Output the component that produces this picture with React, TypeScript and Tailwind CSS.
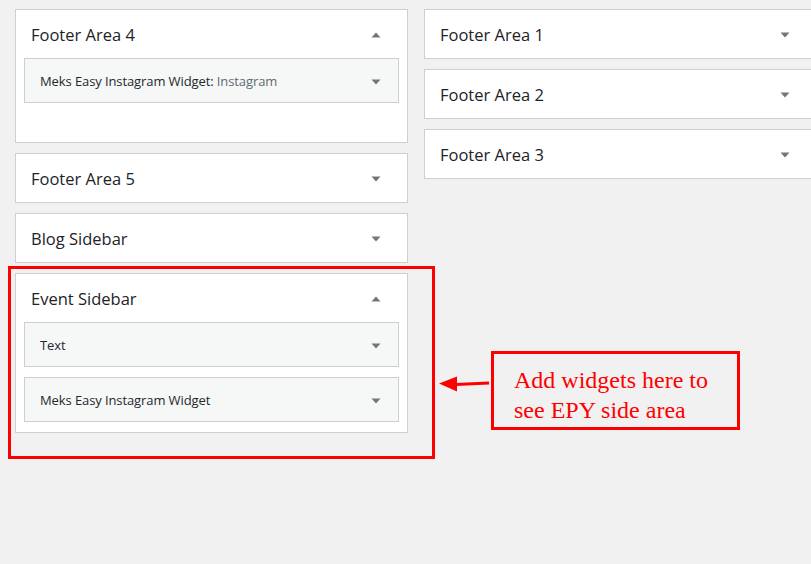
import React from "react";

const font = { fontFamily: '"Open Sans", "Noto Sans", Arial, sans-serif' };

function Caret({ up }: { up?: boolean }) {
  return (
    <svg width="10" height="6" viewBox="0 0 10 6" className="shrink-0">
      {up ? <path d="M5 0.5 L9.5 5.5 L0.5 5.5 Z" fill="#72777c" /> : <path d="M0.5 0.5 L9.5 0.5 L5 5.5 Z" fill="#72777c" />}
    </svg>
  );
}

function Widget({ title, sub }: { title: string; sub?: string }) {
  return (
    <div className="h-[45px] border border-[#ccd0d4] bg-[#f6f7f7] flex items-center justify-between pl-[15px] pr-[17px] pt-[2px]">
      <span className="text-[13px] text-[#23282d] tracking-[-0.1px]">
        {title}
        {sub && <span className="text-[#606a73]"> {sub}</span>}
      </span>
      <Caret />
    </div>
  );
}

function Panel({ title, open, children, bodyClass }: { title: string; open?: boolean; children?: React.ReactNode; bodyClass?: string }) {
  return (
    <div className="bg-white border border-[#ccd0d4]">
      <div className="h-[48px] flex items-center justify-between pl-[15px] pr-[26px] pt-[2px]">
        <span className="text-[16.5px] text-[#1d2327]">{title}</span>
        <Caret up={open} />
      </div>
      {open && <div className={"px-[8px] flex flex-col gap-[10px] " + (bodyClass || "")}>{children}</div>}
    </div>
  );
}

export default function App() {
  return (
    <div className="relative w-[811px] h-[564px] bg-[#f1f1f1] overflow-hidden" style={font}>
      <div className="flex gap-[16px] pt-[9px] pl-[15px]">
        <div className="w-[393px] shrink-0 flex flex-col gap-[10px]">
          <Panel title="Footer Area 4" open bodyClass="pb-[39px]">
            <Widget title="Meks Easy Instagram Widget:" sub="Instagram" />
          </Panel>
          <Panel title="Footer Area 5" />
          <Panel title="Blog Sidebar" />
          <Panel title="Event Sidebar" open bodyClass="pb-[10px]">
            <Widget title="Text" />
            <Widget title="Meks Easy Instagram Widget" />
          </Panel>
        </div>
        <div className="w-[393px] shrink-0 flex flex-col gap-[10px]">
          <Panel title="Footer Area 1" />
          <Panel title="Footer Area 2" />
          <Panel title="Footer Area 3" />
        </div>
      </div>

      {/* annotation: red frame */}
      <div className="absolute left-[8px] top-[266px] w-[427px] h-[193px] border-[3px] border-[#ff0000]" />

      {/* annotation: arrow */}
      <svg className="absolute left-[436px] top-[372px]" width="56" height="24" viewBox="0 0 56 24">
        <path d="M20 12.5 L53 11" stroke="#ff0000" strokeWidth="3.2" />
        <path d="M3 11.5 L21 4.5 L21 19.5 Z" fill="#ff0000" />
      </svg>

      {/* annotation: callout */}
      <div
        className="absolute left-[491px] top-[351px] w-[249px] h-[79px] border-[3px] border-[#ff0000] pl-[20px] pt-[11px] text-[#ff0000] text-[24px] leading-[30px]"
        style={{ fontFamily: '"Liberation Serif", "Times New Roman", serif' }}
      >
        <div>Add widgets here to</div>
        <div>see EPY side area</div>
      </div>
    </div>
  );
}
